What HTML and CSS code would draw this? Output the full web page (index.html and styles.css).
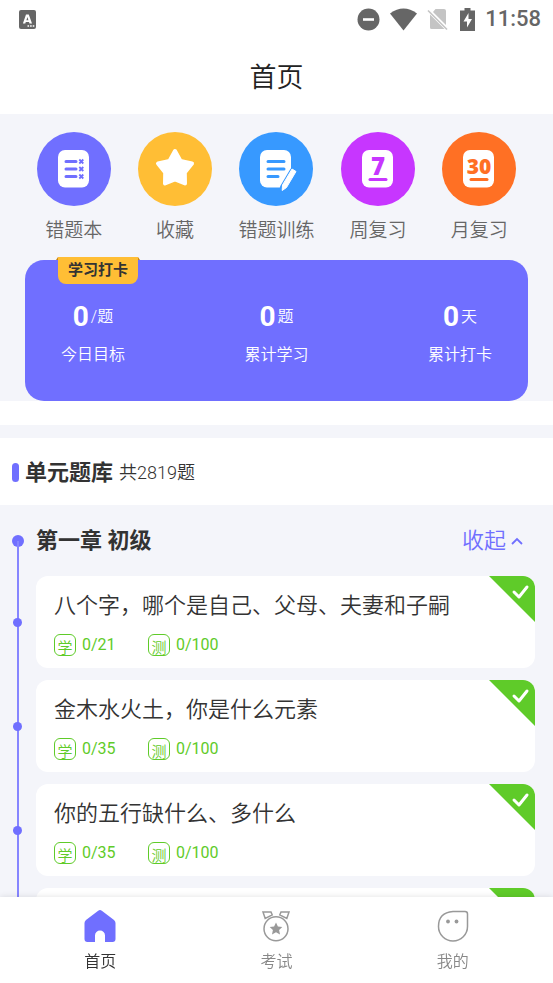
FILE: index.html
```html
<!DOCTYPE html>
<html lang="zh-CN">
<head>
<meta charset="utf-8">
<meta name="viewport" content="width=device-width, initial-scale=1">
<title>首页</title>
<link rel="stylesheet" href="styles.css">
</head>
<body>
<div class="app">
  <div class="status">
    <svg class="status-app" width="17" height="19" viewBox="0 0 17 19" aria-hidden="true"><rect width="17" height="19" rx="2" fill="#666"/><path fill-rule="evenodd" d="M7 4.500h2.800L13 13.500h-2.500L10 12H6.800l-.5 1.500H3.900ZM7.400 10.200h2L8.400 7Z" fill="#fff"/><path d="M8.500 16h7" stroke="#fff" stroke-width="1.500" stroke-dasharray="1.600 1"/></svg>
    <svg width="23" height="23" viewBox="0 0 23 23" aria-hidden="true"><circle cx="11.5" cy="11.5" r="11" fill="#666"/><path d="M6 11.500h11" stroke="#fff" stroke-width="2.600"/></svg>
    <svg width="27" height="23" viewBox="0 0 27 23" aria-hidden="true"><path d="M0 5.500Q13.500-4.500 27 5.500L13.500 22.500Z" fill="#666"/></svg>
    <svg width="21" height="23" viewBox="0 0 21 23" aria-hidden="true"><path d="M8.500 1h8.500q2 0 2 2V17L6 4ZM3 6.500 17.500 21H4.500Q3 21 3 19.500Z" fill="#c4c4c4"/><path d="m1 2.500 19 19" stroke="#c4c4c4" stroke-width="1.600"/></svg>
    <svg class="battery" width="15" height="23" viewBox="0 0 15 23" aria-hidden="true"><path d="M4.500 0h6v2.500H15V23H0V2.500h4.500Z" fill="#666"/><path d="M8.500 5 3.500 13.500h3.500V19.500l5-8.500H8.500Z" fill="#fff"/></svg>
    <span class="time">11:58</span>
  </div>
  <header class="title"><h1>首页</h1></header>

  <main class="content">
    <section class="top">
      <nav class="shortcuts" aria-label="快捷入口">
        <a href="#wrong">
          <svg viewBox="0 0 74 74" aria-hidden="true"><circle cx="37" cy="37" r="37" fill="#706fff"/><rect x="21" y="18" width="31" height="37.500" rx="7" fill="#fff"/><g stroke="#706fff" fill="none"><path d="M29 29.500h10M29 37h10M29 44.500h10" stroke-width="3" stroke-linecap="round"/><path d="m42.300 27.500 4 4m0-4-4 4m0 3.500 4 4m0-4-4 4m0 3.500 4 4m0-4-4 4" stroke-width="1.800"/></g></svg>
          <span>错题本</span>
        </a>
        <a href="#fav">
          <svg viewBox="0 0 74 74" aria-hidden="true"><circle cx="37" cy="37" r="37" fill="#ffbe35"/><path d="M37 19 42.500 29 54 31.500 46.800 40.500 47 51.500 37 47.500 27 51.500 27.200 40.500 20 31.500 31.500 29Z" fill="#fff" stroke="#fff" stroke-width="4" stroke-linejoin="round"/></svg>
          <span>收藏</span>
        </a>
        <a href="#train">
          <svg viewBox="0 0 74 74" aria-hidden="true"><circle cx="37" cy="37" r="37" fill="#3799ff"/><rect x="21" y="18" width="31" height="37.500" rx="7" fill="#fff"/><path d="M29 29.500h16M29 37h16M29 44.500h10" stroke="#3799ff" stroke-width="3" stroke-linecap="round"/><path d="M54.500 39.500 45 55.500" stroke="#3799ff" stroke-width="8" stroke-linecap="round"/><path d="m53 37 4 2.500-9.500 16-4.300 3 .3-5.500Z" fill="#fff" stroke="#fff" stroke-linejoin="round"/></svg>
          <span>错题训练</span>
        </a>
        <a href="#week">
          <svg viewBox="0 0 74 74" aria-hidden="true"><circle cx="37" cy="37" r="37" fill="#c736ff"/><rect x="21" y="18" width="31" height="37.500" rx="7" fill="#fff"/><text x="37" y="43" class="digit seven">7</text><path d="M29 47.500h16" stroke="#c736ff" stroke-width="3" stroke-linecap="round"/></svg>
          <span>周复习</span>
        </a>
        <a href="#month">
          <svg viewBox="0 0 74 74" aria-hidden="true"><circle cx="37" cy="37" r="37" fill="#ff7024"/><rect x="21" y="18" width="31" height="37.500" rx="7" fill="#fff"/><text x="37" y="42" class="digit thirty">30</text><path d="M29 47.500h16" stroke="#ff7024" stroke-width="3" stroke-linecap="round"/></svg>
          <span>月复习</span>
        </a>
      </nav>
      <div class="checkin">
        <span class="ribbon">学习打卡</span>
        <div class="stat"><p class="stat-value"><b>0</b><span>/题</span></p><p class="stat-name">今日目标</p></div>
        <div class="stat"><p class="stat-value"><b>0</b><span>题</span></p><p class="stat-name">累计学习</p></div>
        <div class="stat"><p class="stat-value"><b>0</b><span>天</span></p><p class="stat-name">累计打卡</p></div>
      </div>
    </section>

    <div class="bank">
      <h2>单元题库</h2>
      <span>共2819题</span>
    </div>

    <section class="chapter">
      <div class="chapter-head">
        <h3>第一章 初级</h3>
        <button type="button">收起<svg width="12" height="8" viewBox="0 0 12 8" aria-hidden="true"><path d="m1 7 5-5 5 5" fill="none" stroke="#706fff" stroke-width="1.800"/></svg></button>
      </div>
      <ul class="lessons">
        <li>
          <article class="lesson">
            <h4>八个字，哪个是自己、父母、夫妻和子嗣</h4>
            <p><i>学</i><span>0/21</span><i>测</i><span>0/100</span></p>
            <svg class="done" viewBox="0 0 46 46" aria-hidden="true"><path d="M0 0h46v46Z" fill="#5fcb29"/><path d="m25 16 5 5 8-10" fill="none" stroke="#fff" stroke-width="3" stroke-linecap="round" stroke-linejoin="round"/></svg>
          </article>
        </li>
        <li>
          <article class="lesson">
            <h4>金木水火土，你是什么元素</h4>
            <p><i>学</i><span>0/35</span><i>测</i><span>0/100</span></p>
            <svg class="done" viewBox="0 0 46 46" aria-hidden="true"><path d="M0 0h46v46Z" fill="#5fcb29"/><path d="m25 16 5 5 8-10" fill="none" stroke="#fff" stroke-width="3" stroke-linecap="round" stroke-linejoin="round"/></svg>
          </article>
        </li>
        <li>
          <article class="lesson">
            <h4>你的五行缺什么、多什么</h4>
            <p><i>学</i><span>0/35</span><i>测</i><span>0/100</span></p>
            <svg class="done" viewBox="0 0 46 46" aria-hidden="true"><path d="M0 0h46v46Z" fill="#5fcb29"/><path d="m25 16 5 5 8-10" fill="none" stroke="#fff" stroke-width="3" stroke-linecap="round" stroke-linejoin="round"/></svg>
          </article>
        </li>
        <li>
          <article class="lesson">
            <svg class="done" viewBox="0 0 46 46" aria-hidden="true"><path d="M0 0h46v46Z" fill="#5fcb29"/></svg>
          </article>
        </li>
      </ul>
    </section>
  </main>

  <nav class="tabs" aria-label="主导航">
    <a href="#home" class="active" aria-current="page">
      <svg viewBox="0 0 32 32" aria-hidden="true"><path d="M14.200.700Q16-.500 17.800.700L30 10Q31.500 11.300 31.500 13V29Q31.500 32 28.500 32H21V25.500a5 5 0 0 0-10 0V32H3.500Q.500 32 .500 29V13Q.500 11.300 2 10Z" fill="#706fff"/></svg>
      <span>首页</span>
    </a>
    <a href="#exam">
      <svg viewBox="0 0 32 32" aria-hidden="true"><g fill="none" stroke="#999" stroke-width="1.500"><circle cx="16" cy="18.800" r="12"/><path d="M3 2h8l1.200 3-7 3.500ZM29 2h-8l-1.200 3 7 3.500Z"/></g><path d="m16 12.500 1.900 4 4.400.500-3.200 3 .9 4.400-4-2.200-4 2.200.9-4.400-3.200-3 4.400-.500Z" fill="#999"/></svg>
      <span>考试</span>
    </a>
    <a href="#mine">
      <svg viewBox="0 0 32 32" aria-hidden="true"><path d="M16 1.500H28Q30.500 1.500 30.500 4V16.500A14.500 14.500 0 0 1 1.500 16.500Q1.500 2.500 16 1.500Z" fill="none" stroke="#999" stroke-width="1.500"/><circle cx="11" cy="11.500" r="1.900" fill="#999"/><circle cx="19.500" cy="11.500" r="1.900" fill="#999"/></svg>
      <span>我的</span>
    </a>
  </nav>
</div>
</body>
</html>
```
FILE: styles.css
```css
* { box-sizing: border-box; }

body, h1, h2, h3, h4, p, ul { margin: 0; padding: 0; }

body {
  font-family: Roboto, "Noto Sans CJK SC", sans-serif;
  color: #333;
  background: #fff;
}

svg { display: block; flex: none; }
a { color: inherit; text-decoration: none; }

.app {
  display: flex;
  flex-direction: column;
  height: 100vh;
}

/* system status */
.status {
  display: flex;
  align-items: center;
  gap: 10px;
  height: 38px;
  padding: 0 12px 0 19px;
  flex: none;
}
.status-app { margin-right: auto; }
.battery { margin-left: 2px; }
.time {
  font-size: 22px;
  line-height: 24px;
  font-weight: 500;
  color: #666;
}

.title {
  flex: none;
  height: 76px;
  padding-top: 4px;
  display: flex;
  align-items: center;
  justify-content: center;
}
.title h1 { font-size: 27px; line-height: 40px; font-weight: 350; color: #222; }

.content {
  flex: 1;
  min-height: 0;
  overflow-y: auto;
  scrollbar-width: none;
  background: #f4f5fa;
}

/* shortcuts and daily check-in */
.shortcuts {
  display: grid;
  grid-template-columns: repeat(5, 1fr);
  padding: 18px 23px 0;
}
.shortcuts a {
  display: flex;
  flex-direction: column;
  align-items: center;
  gap: 11px;
  font-size: 19px;
  line-height: 28px;
  font-weight: 350;
  color: #666;
  white-space: nowrap;
}
.shortcuts svg { width: 74px; height: 74px; }
.digit { font-family: "Open Sans", sans-serif; font-weight: 800; text-anchor: middle; }
.seven { font-size: 24px; fill: #c736ff; }
.thirty { font-size: 21px; fill: #ff7024; }

.checkin {
  position: relative;
  display: flex;
  justify-content: space-between;
  margin: 15px 25px 0;
  padding: 40px 36px 34px;
  border-radius: 19px;
  background: #706fff;
  color: #fff;
}
.ribbon {
  position: absolute;
  top: -3px;
  left: 33px;
  padding: 0 10px;
  border-radius: 0 0 8px 8px;
  background: #ffbe35;
  color: #333;
  font-size: 15px;
  line-height: 27px;
  font-weight: 700;
}
.ribbon::before, .ribbon::after {
  content: "";
  position: absolute;
  top: 0;
  border-bottom: 3px solid #c88410;
}
.ribbon::before { right: 100%; border-left: 2px solid transparent; }
.ribbon::after { left: 100%; border-right: 2px solid transparent; }
.stat { font-size: 16px; line-height: 24px; font-weight: 350; }
.stat-value {
  display: flex;
  align-items: center;
  justify-content: center;
  gap: 2px;
  height: 34px;
}
.stat b { font-size: 28px; line-height: 34px; font-weight: 700; }
.stat-name { margin-top: 9px; }

.top::after {
  content: "";
  display: block;
  height: 24px;
  margin-bottom: 13px;
  background: #fff;
}
.bank {
  display: flex;
  align-items: center;
  gap: 6px;
  height: 67px;
  padding: 2px 12px 0;
  background: #fff;
}
.bank::before {
  content: "";
  width: 7px;
  height: 19px;
  border-radius: 4px;
  background: #706fff;
}
.bank h2 { font-size: 22px; line-height: 32px; font-weight: 700; }
.bank span { font-size: 18px; line-height: 28px; font-weight: 350; }

/* chapter timeline */
.chapter { padding: 0 18px 12px 17px; }
.chapter-head {
  position: relative;
  display: flex;
  align-items: center;
  justify-content: space-between;
  height: 71px;
  padding: 0 12px 0 19px;
}
.chapter-head::before {
  content: "";
  position: absolute;
  left: -5px;
  top: 30px;
  width: 12px;
  height: 12px;
  border-radius: 50%;
  background: #706fff;
}
.chapter-head::after {
  content: "";
  position: absolute;
  left: 0;
  top: 36px;
  bottom: 0;
  border-left: 2px solid #8685ff;
}
.chapter-head h3 { font-size: 22px; line-height: 32px; font-weight: 700; }
.chapter-head button {
  display: flex;
  align-items: center;
  gap: 5px;
  padding: 0;
  border: 0;
  background: none;
  font: inherit;
  font-size: 22px;
  line-height: 32px;
  font-weight: 350;
  color: #706fff;
}

.lessons { list-style: none; }
.lessons li {
  position: relative;
  padding: 0 0 12px 17px;
  border-left: 2px solid #8685ff;
}
.lessons li::before {
  content: "";
  position: absolute;
  left: -6px;
  top: 42px;
  width: 9px;
  height: 9px;
  border-radius: 50%;
  background: #706fff;
}
.lesson {
  position: relative;
  min-height: 92px;
  padding: 13px 18px 11px;
  border-radius: 12px;
  background: #fff;
  overflow: hidden;
}
.lesson h4 { font-size: 22px; line-height: 34px; font-weight: 350; }
.lesson p {
  display: flex;
  align-items: center;
  margin-top: 11px;
  font-size: 16px;
  line-height: 22px;
  color: #5fcb29;
}
.lesson i {
  width: 22px;
  height: 22px;
  margin-right: 6px;
  border: 1px solid #5fcb29;
  border-radius: 6px;
  overflow: hidden;
  font-size: 15px;
  line-height: 26px;
  font-style: normal;
  font-weight: 350;
  text-align: center;
}
.lesson span { min-width: 66px; }
.done { position: absolute; top: 0; right: 0; width: 46px; height: 46px; }

/* bottom tabs */
.tabs {
  position: relative;
  flex: none;
  display: grid;
  grid-template-columns: repeat(3, 1fr);
  padding: 13px 12px 9px;
  background: #fff;
  box-shadow: 0 0 6px rgba(0, 0, 0, 0.12);
}
.tabs a {
  display: flex;
  flex-direction: column;
  align-items: center;
  gap: 8px;
  font-size: 16px;
  line-height: 24px;
  font-weight: 350;
  color: #888;
}
.tabs svg { width: 32px; height: 32px; }
.tabs .active { color: #333; }
```
